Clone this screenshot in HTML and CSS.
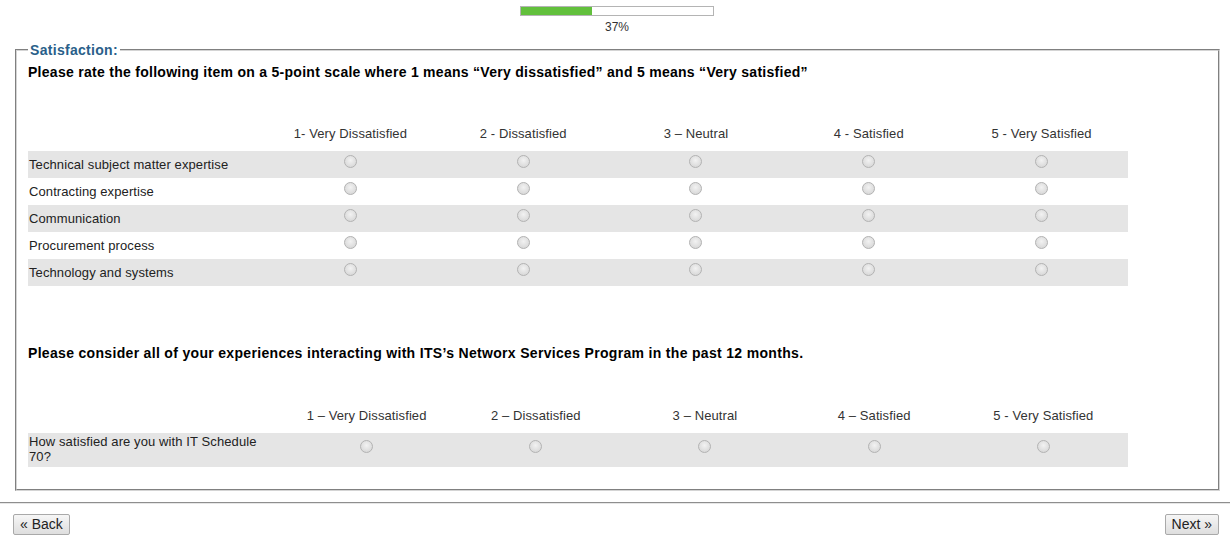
FILE: index.html
```html
<!DOCTYPE html>
<html lang="en">
<head>
  <meta charset="UTF-8">
  <title>Survey – Satisfaction</title>
  <link rel="stylesheet" href="styles.css">
</head>
<body>
  <div class="progress">
    <div class="progress-bar"><div class="progress-fill" style="width: 37%"></div></div>
    <div class="progress-text">37%</div>
  </div>

  <form class="survey">
    <fieldset>
      <legend>Satisfaction:</legend>
      <p class="question">Please rate the following item on a 5-point scale where 1 means “Very dissatisfied” and 5 means “Very satisfied”</p>
      <table class="matrix matrix-a">
        <thead>
          <tr>
            <th class="label-col"></th>
            <th>1- Very Dissatisfied</th>
            <th>2 - Dissatisfied</th>
            <th>3 – Neutral</th>
            <th>4 - Satisfied</th>
            <th>5 - Very Satisfied</th>
          </tr>
        </thead>
        <tbody>
          <tr class="odd">
            <td class="label">Technical subject matter expertise</td>
            <td><input type="radio" name="q1"></td>
            <td><input type="radio" name="q1"></td>
            <td><input type="radio" name="q1"></td>
            <td><input type="radio" name="q1"></td>
            <td><input type="radio" name="q1"></td>
          </tr>
          <tr>
            <td class="label">Contracting expertise</td>
            <td><input type="radio" name="q2"></td>
            <td><input type="radio" name="q2"></td>
            <td><input type="radio" name="q2"></td>
            <td><input type="radio" name="q2"></td>
            <td><input type="radio" name="q2"></td>
          </tr>
          <tr class="odd">
            <td class="label">Communication</td>
            <td><input type="radio" name="q3"></td>
            <td><input type="radio" name="q3"></td>
            <td><input type="radio" name="q3"></td>
            <td><input type="radio" name="q3"></td>
            <td><input type="radio" name="q3"></td>
          </tr>
          <tr>
            <td class="label">Procurement process</td>
            <td><input type="radio" name="q4"></td>
            <td><input type="radio" name="q4"></td>
            <td><input type="radio" name="q4"></td>
            <td><input type="radio" name="q4"></td>
            <td><input type="radio" name="q4"></td>
          </tr>
          <tr class="odd">
            <td class="label">Technology and systems</td>
            <td><input type="radio" name="q5"></td>
            <td><input type="radio" name="q5"></td>
            <td><input type="radio" name="q5"></td>
            <td><input type="radio" name="q5"></td>
            <td><input type="radio" name="q5"></td>
          </tr>
        </tbody>
      </table>

      <p class="question question-2">Please consider all of your experiences interacting with ITS’s Networx Services Program in the past 12 months.</p>
      <table class="matrix matrix-b">
        <thead>
          <tr>
            <th class="label-col"></th>
            <th>1 – Very Dissatisfied</th>
            <th>2 – Dissatisfied</th>
            <th>3 – Neutral</th>
            <th>4 – Satisfied</th>
            <th>5 - Very Satisfied</th>
          </tr>
        </thead>
        <tbody>
          <tr class="odd tall">
            <td class="label">How satisfied are you with IT Schedule 70?</td>
            <td><input type="radio" name="q6"></td>
            <td><input type="radio" name="q6"></td>
            <td><input type="radio" name="q6"></td>
            <td><input type="radio" name="q6"></td>
            <td><input type="radio" name="q6"></td>
          </tr>
        </tbody>
      </table>
    </fieldset>
  </form>

  <hr class="divider">

  <div class="nav">
    <button type="button">« Back</button>
    <button type="button">Next »</button>
  </div>
</body>
</html>
```

FILE: styles.css
```css
body { margin: 0; font-family: "Liberation Sans", Arial, sans-serif; color: #222; background: #fff; }

.progress { width: 194px; margin: 6px auto 0; padding-left: 4px; text-align: center; }
.progress-bar { height: 8px; border: 1px solid #b4b4b4; background: #fff; }
.progress-fill { height: 100%; background: #62c03c; }
.progress-text { font-size: 12px; line-height: 14px; margin-top: 4px; color: #333; }

.survey { padding: 0 10px 0 15px; margin-top: 8px; }
fieldset { margin: 0; padding: 6px 11px 22px; border: 2px groove #d4d4d4; }
legend { padding: 0 2px; font-size: 14px; line-height: 16px; font-weight: bold; letter-spacing: 0.3px; color: #2a5f8a; }

.question { margin: 0; font-size: 14px; line-height: 16px; font-weight: bold; letter-spacing: 0.28px; color: #000; }
.question-2 { margin-top: 59px; letter-spacing: 0.32px; }

.matrix { border-collapse: collapse; width: 1100px; table-layout: fixed; font-size: 13px; letter-spacing: 0.1px; }
.matrix-a { margin-top: 46px; }
.matrix-b { margin-top: 47px; }
.matrix-a .label-col { width: 236px; }
.matrix-b .label-col { width: 254px; }
.matrix th { font-weight: normal; color: #333; line-height: 15px; padding: 0 0 10px; text-align: center; vertical-align: bottom; }
.matrix td { padding: 4px 0 0; height: 23px; text-align: center; vertical-align: top; line-height: 15px; }
.matrix td.label { text-align: left; padding: 6px 0 0 1px; height: 21px; }
.matrix tr.odd td { background: #e5e5e5; }
.matrix tr.tall td { padding-top: 7px; height: 27px; }
.matrix tr.tall td.label { padding: 1px 24px 0 1px; height: 33px; }

input[type=radio] {
  appearance: none; -webkit-appearance: none;
  width: 13px; height: 13px; margin: 0; display: inline-block;
  border: 1px solid #b3b3b3; border-radius: 50%; box-sizing: border-box;
  background: radial-gradient(circle at 50% 40%, #f2f2f2 0, #e0e0e0 55%, #d2d2d2 100%);
}

.divider { margin: 11px 0 10px; border: 0; border-top: 1px solid #8e8e8e; border-bottom: 1px solid #e6e6e6; }

.nav { display: flex; justify-content: space-between; padding: 0 11px 0 13px; }
.nav button {
  font-family: inherit; font-size: 14px; line-height: 17px; color: #222;
  padding: 1px 6px; border: 1px solid #a9a9a9; border-radius: 2px;
  background: linear-gradient(#f6f6f6, #dedede);
}
```
